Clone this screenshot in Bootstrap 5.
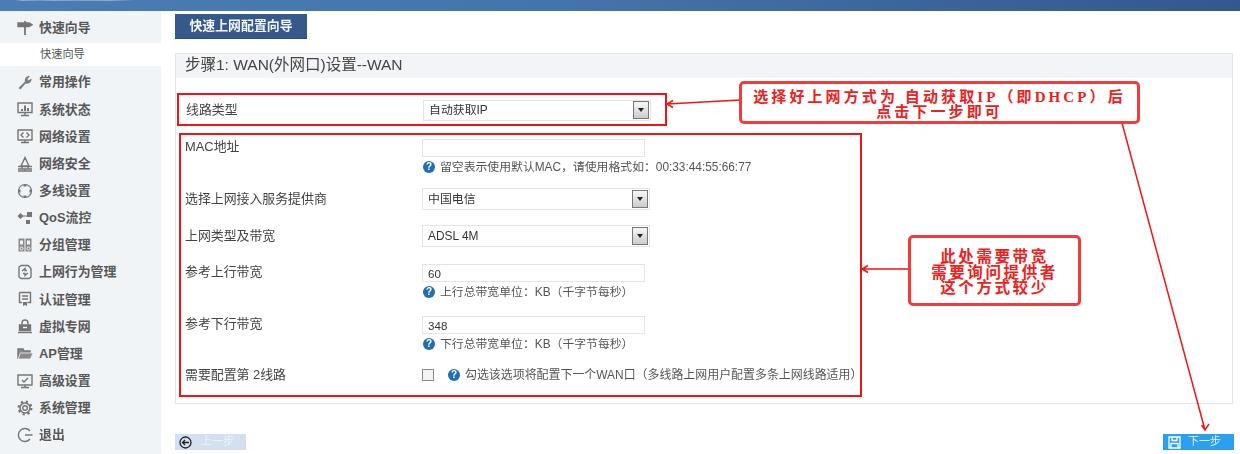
<!DOCTYPE html>
<html lang="zh-CN"><head><meta charset="utf-8"><title>快速上网配置向导</title>
<link href="https://cdn.jsdelivr.net/npm/bootstrap@5.3.0/dist/css/bootstrap.min.css" rel="stylesheet">
<style>
html,body{height:454px;overflow:hidden;background:#fff}
body{font-family:"Liberation Sans","Noto Sans CJK SC",sans-serif;font-size:12.9px;color:#444;line-height:1.2}
.shell{position:relative;width:1240px;height:454px;filter:blur(.4px)}
.topbar{height:11px;background:linear-gradient(90deg,transparent 15px,#8dacc8 22px,#6f97bb 40px,#8dacc8 55px,#7ba0c0 75px,#8dacc8 110px,transparent 135px) 0 0/100% 1px no-repeat,linear-gradient(90deg,#4a7db3 0,#4475aa 45%,#33588d 100%)}
.side{width:161px;height:443px;background:#f1f4f7;padding-top:3.5px}
.side-item{height:27.15px;padding-left:17px;gap:6px;font-weight:700;color:#585858}
.side-item svg{width:16px;height:16px;flex:none;fill:none;stroke:#757575;stroke-width:1.4}
.side-sub{height:23px;margin:1.5px 0 2.5px;background:#fff;padding:1px 0 0 40px;font-size:11.2px;color:#555}
.main{width:1079px;padding:3px 7px 0 14px}
.tabbtn{width:132px;height:25px;background:#36598c;color:#f2f5fa;font-weight:700;border-bottom:1px solid #2c4a78}
.wiz{margin-top:14px;height:351px;border:1px solid #e6e6e6}
.wiz-head{height:24px;background:#f2f4f7;padding:0 0 1px 9px;font-size:15.5px;color:#444}
.mark1{margin:15px 0 0 1px;width:490px;height:33px;border:2px solid #f01515;padding-left:7px}
.mark2{margin:7px 0 0 3px;width:683px;height:264px;border:2px solid #f01515;padding:4px 0 0 4px}
.lbl{width:237px;flex:none;color:#444}
.fake-sel{width:228px;height:21px;border:1px solid #e4e4e4;padding:0 1px 0 5px;font-size:11.9px;color:#333;background:#fff}
.mark1 .fake-sel{margin-top:1px}
.mark2 .fake-sel{height:22px}
.sel-arrow{width:16px;height:18px;border:1px solid #777;background:linear-gradient(#f7f7f7,#ccc)}
.sel-arrow i{border:3.5px solid transparent;border-top:4px solid #222;border-bottom:0}
.txt-in.form-control{width:223px;height:18px;min-height:0;border:1px solid #e4e4e4;border-radius:0;padding:0 5px;font-size:11.6px;color:#333;box-shadow:none}
.hint{font-size:11.85px;color:#555;gap:5px;margin:2px 0 0 1px;height:16px}
.hint-wide{font-size:11.95px;margin:0}
.qm{width:12px;height:12px;border-radius:50%;background:#1f6db5;color:#fff;font-size:10px;font-weight:700;line-height:12px;text-align:center;flex:none}
.r1{height:49px}.r2{height:37px}.r3{height:39px}.r4{height:52px}.r5{height:51px}
.lab-c{margin-top:3px}
.tick.form-check-input{width:12px;height:12px;margin:0 14px 0 0;border:1px solid #888;border-radius:0;background-color:#f4f4f4}
.foot-row{margin-top:30px}
.stepbtn{width:71px;height:16px;font-size:11px;gap:9px;padding-left:4px}
.step-prev{background:#d3e0f0;color:#eef3f9}
.step-next{background:#2ba0ee;color:#e8f5ff;padding-left:5px;gap:7px;margin-right:-1px}
.overlay{position:absolute;left:0;top:0;pointer-events:none}
.note{position:absolute;border:3px solid #f53a3a;border-radius:5px;background:#fff;color:#ee2020;font-family:"Liberation Serif","Noto Sans CJK SC",serif;font-weight:700;text-align:center}
.note-a{left:739px;top:81px;width:401px;height:43px;font-size:15px;line-height:15px;letter-spacing:3.1px;padding-top:6px}
.note-b{left:908px;top:235px;width:173px;height:71px;font-size:15.5px;line-height:15.5px;letter-spacing:2.6px;padding-top:11px}
</style></head><body>
<div class="shell">
<div class="topbar"></div>
<div class="d-flex">
<nav class="side">
<div class="side-item d-flex align-items-center"><svg viewBox="0 0 16 16"><path d="M8 1v14" stroke-width="1.800"/><path d="M1 3h11l3 1.800L12 6.500H1z" fill="#757575"/></svg>快速向导</div>
<div class="side-sub d-flex align-items-center">快速向导</div>
<div class="side-item d-flex align-items-center"><svg viewBox="0 0 16 16"><path d="M1.500 14l6.500-6.500C7.300 4 9.500 1.500 13 2l-2.500 3 1 1.500 3-2c.3 3.500-2.500 6-6 5L3.500 15.500z" fill="#7d7d7d" stroke="none"/></svg>常用操作</div>
<div class="side-item d-flex align-items-center"><svg viewBox="0 0 16 16"><path d="M1 2h14v9.500H1zM8 11.500V14M4 14.500h8"/><path d="M5 10V8M8 10V4.500M11 10V7" stroke-width="2"/></svg>系统状态</div>
<div class="side-item d-flex align-items-center"><svg viewBox="0 0 16 16"><path d="M1 2h14v10H1zM8 12v2M4 14.500h8M6.500 4.500L4 7l2.500 2.500M9.500 4.500L12 7 9.500 9.500"/></svg>网络设置</div>
<div class="side-item d-flex align-items-center"><svg viewBox="0 0 16 16"><path d="M8 1.500L4 10h8zM1 10.500h14M1 13h14M1 15h14M5 10.500V13M11 10.500V13M8 13v2"/></svg>网络安全</div>
<div class="side-item d-flex align-items-center"><svg viewBox="0 0 16 16"><circle cx="8" cy="8" r="6.500" stroke-width="1.200"/><path d="M6.500 1.500h3v2h-3zM6.500 12.500h3v2h-3zM1 6.500h2.500v3H1zM12.500 6.500H15v3h-2.500z" fill="#757575" stroke="none"/></svg>多线设置</div>
<div class="side-item d-flex align-items-center"><svg viewBox="0 0 16 16"><path d="M3.500 3L6.500 6 3.500 9 .5 6zM10 2h5v5h-5zM9 10h4v4H9z" fill="#757575" stroke="none"/><path d="M6 6h4" stroke-width="1"/></svg>QoS流控</div>
<div class="side-item d-flex align-items-center"><svg viewBox="0 0 16 16"><path d="M1.500 1.500h6v13h-6zM8.500 1.500h6v13h-6z" fill="#8a8a8a" stroke="none"/><path d="M3 3.500h3v4H3zM10 3.500h3v4h-3z" fill="#f1f4f7" stroke="none"/><circle cx="4.500" cy="11.500" r="1.500" stroke="#f1f4f7" stroke-width="1"/><circle cx="11.500" cy="11.500" r="1.500" stroke="#f1f4f7" stroke-width="1"/></svg>分组管理</div>
<div class="side-item d-flex align-items-center"><svg viewBox="0 0 16 16"><path d="M4 1.500h7l3 3V13l-2 1.500H4L2 13V3zM5 7l3-2.500V6.500h2M11 9l-3 2.500V9.500H6"/></svg>上网行为管理</div>
<div class="side-item d-flex align-items-center"><svg viewBox="0 0 16 16"><path d="M2.500 1.500h11v10h-3M5 11.500H2.500v-10M5 5h6M5 8h6"/><path d="M6 11h4v4l-2-1-2 1z" fill="#757575" stroke="none"/></svg>认证管理</div>
<div class="side-item d-flex align-items-center"><svg viewBox="0 0 16 16"><path d="M5 7V5a3 3 0 0 1 6 0v2"/><path d="M2.500 7h11v5.500h-11z" fill="#757575"/><path d="M1 14.500h14"/><path d="M6 9.500h4" stroke="#f1f4f7"/></svg>虚拟专网</div>
<div class="side-item d-flex align-items-center"><svg viewBox="0 0 16 16"><path d="M1 13V3h5l1 2h6v2" fill="#8a8a8a"/><path d="M1 13l2.500-6H16l-2.500 6z" fill="#8a8a8a" stroke="#f1f4f7" stroke-width=".8"/></svg>AP管理</div>
<div class="side-item d-flex align-items-center"><svg viewBox="0 0 16 16"><path d="M1 2h14v10H1zM8 12v2M4 14.500h8M5 7l2 2 4-4"/></svg>高级设置</div>
<div class="side-item d-flex align-items-center"><svg viewBox="0 0 16 16"><circle cx="8" cy="8" r="2.300"/><circle cx="8" cy="8" r="5" stroke-width="1.600"/><circle cx="8" cy="8" r="6.400" stroke-dasharray="2.200 2.830" stroke-width="2.200"/></svg>系统管理</div>
<div class="side-item d-flex align-items-center"><svg viewBox="0 0 16 16"><path d="M13 4a6.500 6.500 0 1 0 0 8M8 8h7.500"/></svg>退出</div>
</nav>
<main class="main">
<div class="tabbtn d-flex align-items-center justify-content-center">快速上网配置向导</div>
<section class="wiz">
<div class="wiz-head d-flex align-items-center">步骤1: WAN(外网口)设置--WAN</div>
<div class="mark1 d-flex align-items-center">
<div class="lbl">线路类型</div>
<div class="fake-sel d-flex align-items-center justify-content-between"><span>自动获取IP</span><span class="sel-arrow d-flex align-items-center justify-content-center"><i></i></span></div>
</div>
<div class="mark2">
<div class="r1 d-flex"><div class="lbl">MAC地址</div><div><input class="txt-in form-control" type="text"><div class="hint d-flex align-items-center"><span class="qm">?</span><span>留空表示使用默认MAC，请使用格式如：00:33:44:55:66:77</span></div></div></div>
<div class="r2 d-flex"><div class="lbl lab-c">选择上网接入服务提供商</div><div class="fake-sel d-flex align-items-center justify-content-between"><span>中国电信</span><span class="sel-arrow d-flex align-items-center justify-content-center"><i></i></span></div></div>
<div class="r3 d-flex"><div class="lbl lab-c">上网类型及带宽</div><div class="fake-sel d-flex align-items-center justify-content-between"><span>ADSL 4M</span><span class="sel-arrow d-flex align-items-center justify-content-center"><i></i></span></div></div>
<div class="r4 d-flex"><div class="lbl">参考上行带宽</div><div><input class="txt-in form-control" type="text" value="60"><div class="hint d-flex align-items-center"><span class="qm">?</span><span>上行总带宽单位：KB（千字节每秒）</span></div></div></div>
<div class="r5 d-flex"><div class="lbl">参考下行带宽</div><div><input class="txt-in form-control" type="text" value="348"><div class="hint d-flex align-items-center"><span class="qm">?</span><span>下行总带宽单位：KB（千字节每秒）</span></div></div></div>
<div class="d-flex align-items-center"><div class="lbl">需要配置第 2线路</div><input class="tick form-check-input" type="checkbox"><div class="hint hint-wide d-flex align-items-center"><span class="qm">?</span><span>勾选该选项将配置下一个WAN口（多线路上网用户配置多条上网线路适用）</span></div></div>
</div>
</section>
<div class="foot-row d-flex justify-content-between">
<div class="stepbtn step-prev d-flex align-items-center"><svg width="13" height="13" viewBox="0 0 13 13" fill="none" stroke="#222" stroke-width="1.300"><circle cx="6.500" cy="6.500" r="5.500"/><path d="M10 6.500H3.500M6 4L3.500 6.500 6 9"/></svg>上一步</div>
<div class="stepbtn step-next d-flex align-items-center"><svg width="13" height="13" viewBox="0 0 13 13" fill="none" stroke="#fff" stroke-width="1.300"><path d="M1 1h11v11H1zM4 1v3.500h5V1M3 12V7.500h7V12"/></svg>下一步</div>
</div>
</main>
</div>
<svg class="overlay" width="1240" height="454" fill="none" stroke="#f01515" stroke-width="1.500">
<path d="M740 100L667 104M673 100.500L667 104 673 107.500"/>
<path d="M1122 123L1205 430M1201.500 425L1205 430 1209 424"/>
<path d="M909 269H862M868 265.500L862 269 868 272.500"/>
</svg>
<div class="note note-a">选择好上网方式为 自动获取IP（即DHCP）后<br>点击下一步即可</div>
<div class="note note-b">此处需要带宽<br>需要询问提供者<br>这个方式较少</div>
</div>
<script src="https://cdn.jsdelivr.net/npm/bootstrap@5.3.0/dist/js/bootstrap.bundle.min.js"></script>
</body></html>
